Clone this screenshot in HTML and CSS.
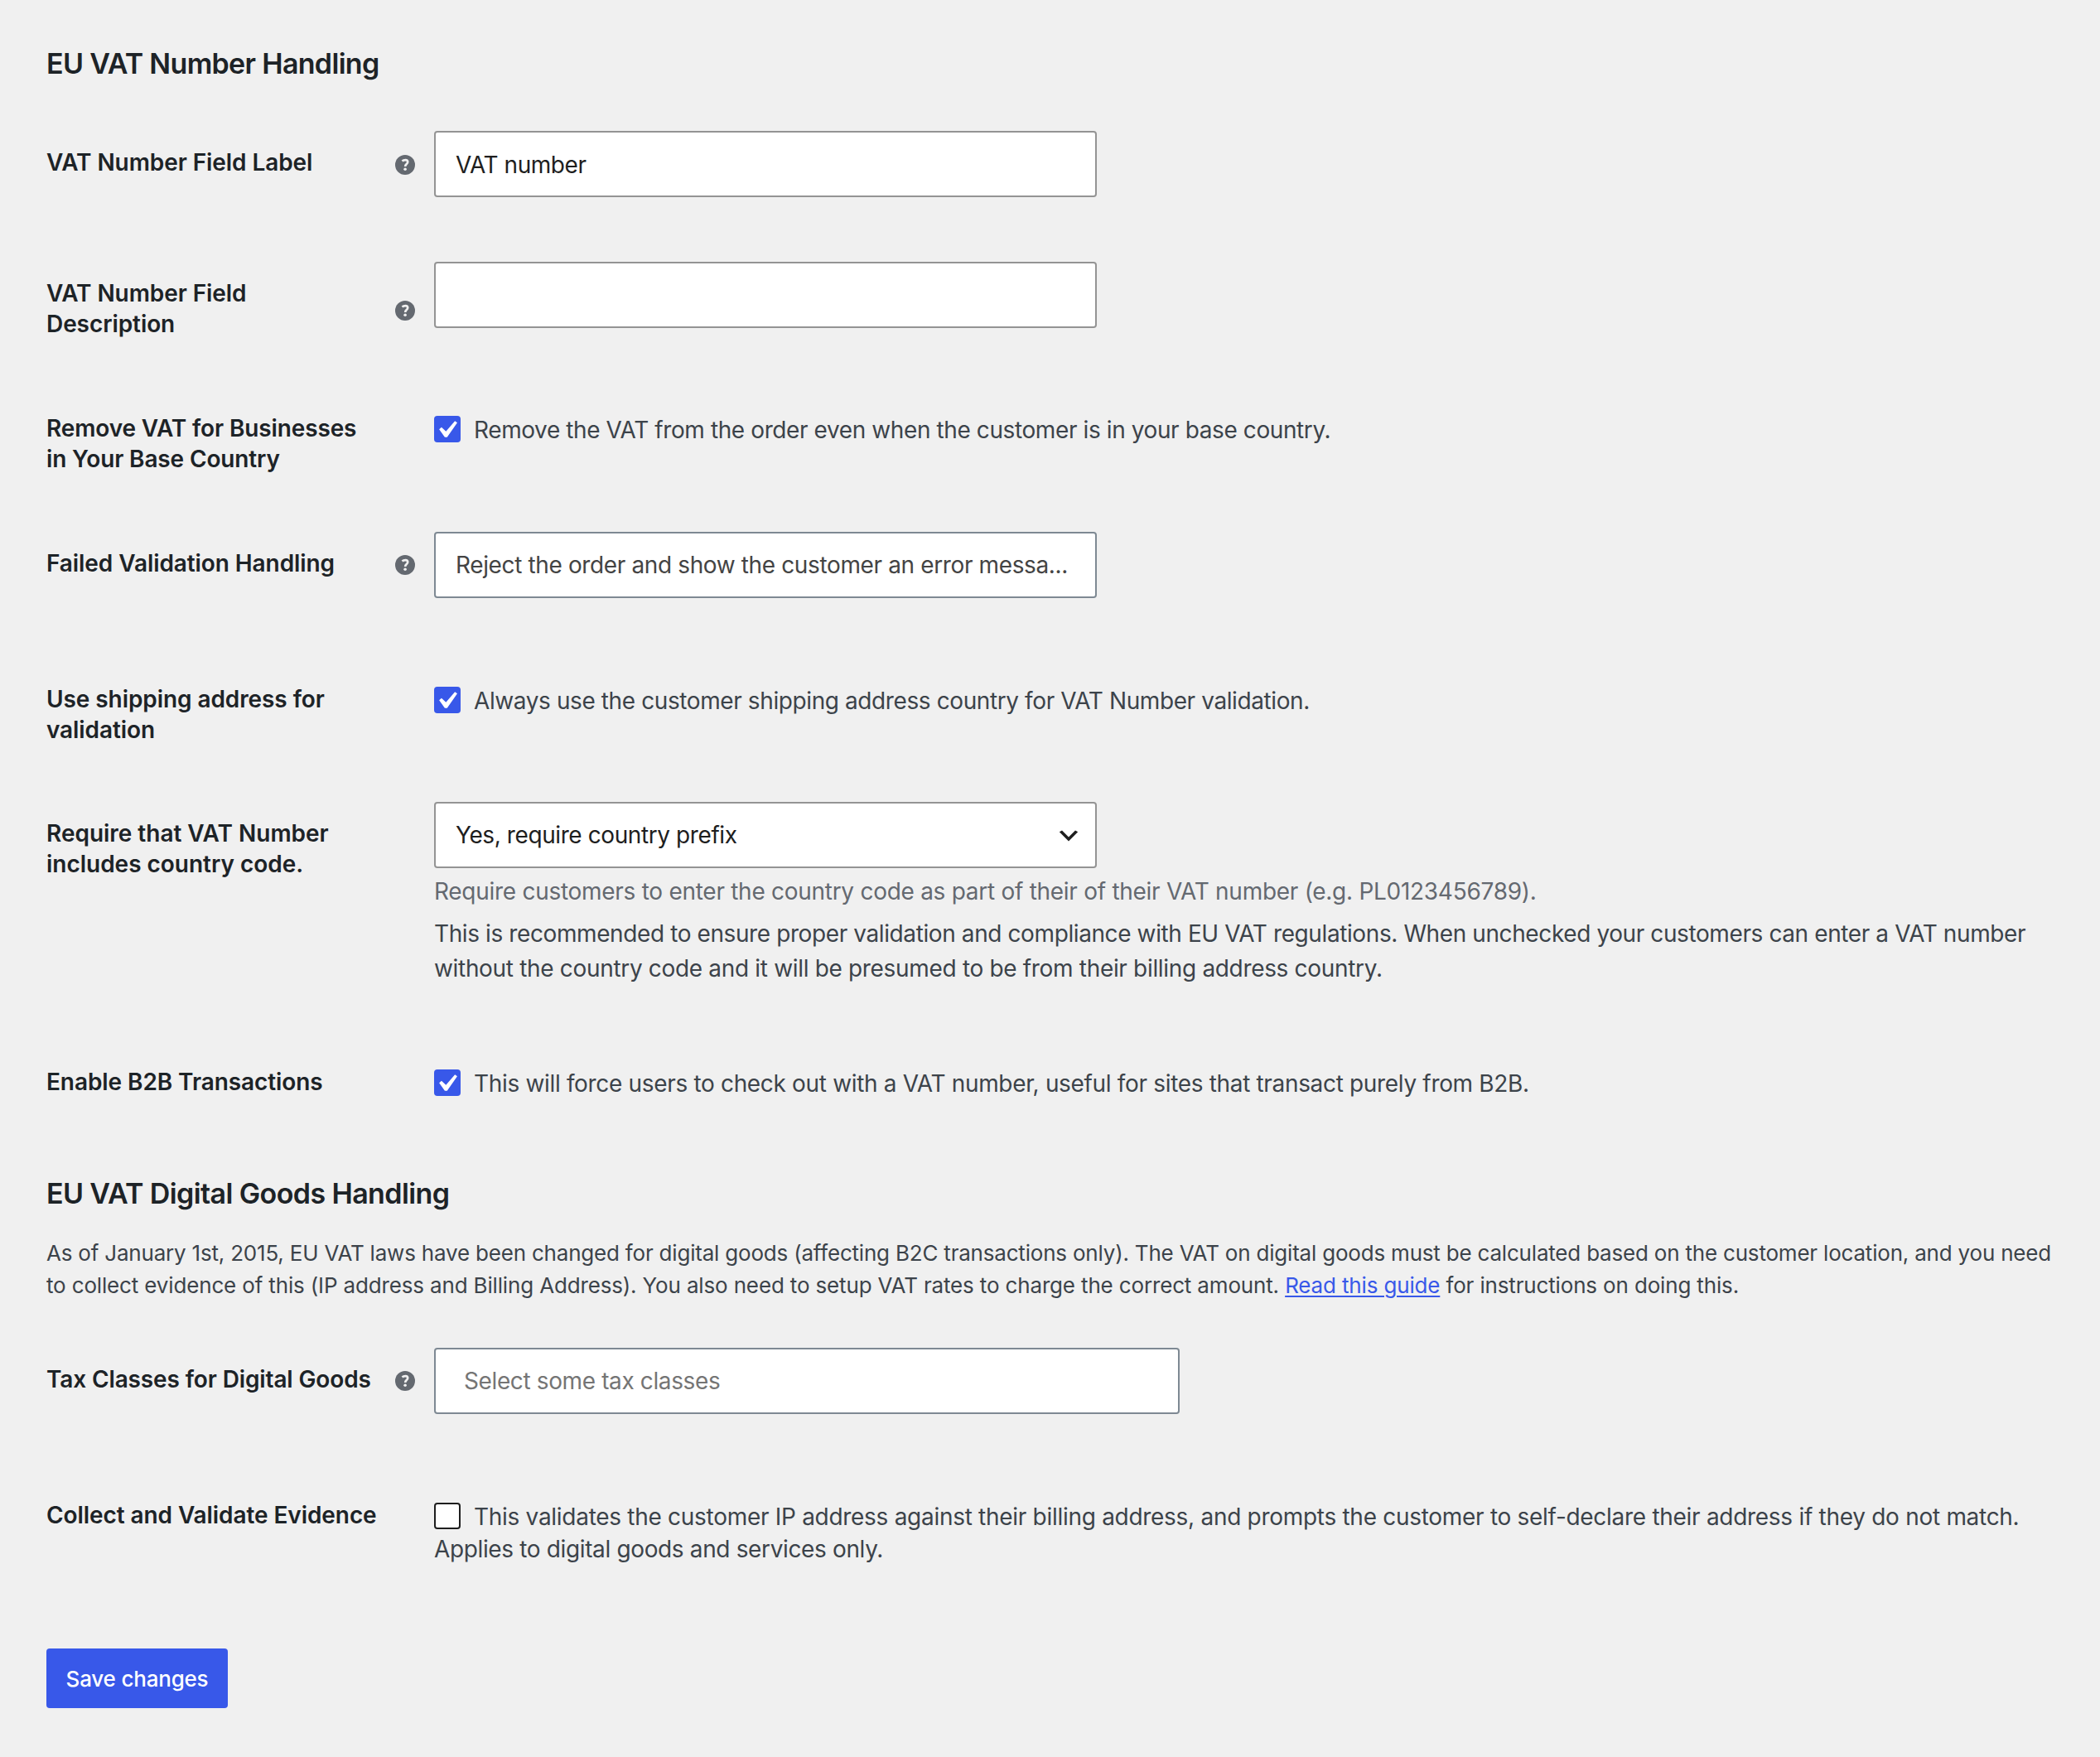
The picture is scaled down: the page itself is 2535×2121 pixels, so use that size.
FILE: index.html
```html
<!DOCTYPE html>
<html lang="en">
<head>
<meta charset="UTF-8">
<title>EU VAT Number Handling</title>

<link rel="stylesheet" href="styles.css">

</head>
<body>

<!-- icons shared by the rows -->
<svg class="sprite" width="0" height="0">
	<symbol id="help" viewBox="0 0 24 24">
		<circle cx="12" cy="12" r="12" fill="#646970" />
		<path d="M8.5 7.5C10.1 6 15.2 5 15.2 8.6c0 2.6-3 2.4-3 5.4" fill="none" stroke="#f0f0f0" stroke-width="2.7" />
		<circle cx="12.1" cy="17.3" r="1.8" fill="#f0f0f0" />
	</symbol>
	<symbol id="check" viewBox="2.857 1.905 15.238 15.238">
		<path d="M14.83 4.89l1.34.94-5.81 8.38H9.02L5.78 9.67l1.34-1.25 2.57 2.4z" fill="#fff" />
	</symbol>
	<symbol id="chevron" viewBox="0 0 20 20">
		<path d="M5 6l5 5 5-5 2 1-7 7-7-7 2-1z" fill="#1e1e1e" />
	</symbol>
</svg>

<form class="wrap">

	<h2>EU VAT Number Handling</h2>

	<div class="form-table">
		<div class="row first">
			<label class="title" for="vat_label">VAT Number Field Label</label>
			<svg class="tip"><use href="#help" /></svg>
			<div class="field">
				<input type="text" class="text" id="vat_label" value="VAT number">
			</div>
		</div>

		<div class="row">
			<label class="title" for="vat_desc">VAT Number Field<br>Description</label>
			<svg class="tip low"><use href="#help" /></svg>
			<div class="field">
				<input type="text" class="text" id="vat_desc">
			</div>
		</div>

		<div class="row">
			<div class="title tight">Remove VAT for Businesses<br>in Your Base Country</div>
			<div class="field checks">
				<label><span class="box on"><svg><use href="#check" /></svg></span>Remove the VAT from the order even when the customer is in your base country.</label>
			</div>
		</div>

		<div class="row failed">
			<div class="title">Failed Validation Handling</div>
			<svg class="tip"><use href="#help" /></svg>
			<div class="field">
				<div class="select2">Reject the order and show the customer an error messa...</div>
			</div>
		</div>

		<div class="row shipping">
			<div class="title">Use shipping address for<br>validation</div>
			<div class="field checks">
				<label><span class="box on"><svg><use href="#check" /></svg></span>Always use the customer shipping address country for VAT Number validation.</label>
			</div>
		</div>

		<div class="row prefix">
			<div class="title loose">Require that VAT Number<br>includes country code.</div>
			<div class="field">
				<div class="select"><span>Yes, require country prefix</span><svg><use href="#chevron" /></svg></div>
				<p class="description">Require customers to enter the country code as part of their of their VAT number (e.g. PL0123456789).</p>
				<p class="note">This is recommended to ensure proper validation and compliance with EU VAT regulations. When unchecked your customers can enter a VAT number<br><span class="last">without the country code and it will be presumed to be from their billing address country.</span></p>
			</div>
		</div>

		<div class="row">
			<div class="title">Enable B2B Transactions</div>
			<div class="field checks b2b">
				<label><span class="box on"><svg><use href="#check" /></svg></span>This will force users to check out with a VAT number, useful for sites that transact purely from B2B.</label>
			</div>
		</div>
	</div>

	<h2 class="digital">EU VAT Digital Goods Handling</h2>

	<p class="intro">As of January 1st, 2015, EU VAT laws have been changed for digital goods (affecting B2C transactions only). The VAT on digital goods must be calculated based on the customer location, and you need<br><span class="last">to collect evidence of this (IP address and Billing Address). You also need to setup VAT rates to charge the correct amount. <a href="#">Read this guide</a> for instructions on doing this.</span></p>

	<div class="form-table">
		<div class="row tax">
			<div class="title tight">Tax Classes for Digital Goods</div>
			<svg class="tip"><use href="#help" /></svg>
			<div class="field">
				<div class="select2 multi">Select some tax classes</div>
			</div>
		</div>

		<div class="row evidence">
			<div class="title">Collect and Validate Evidence</div>
			<div class="field checks">
				<label><span class="box"></span>This validates the customer IP address against their billing address, and prompts the customer to self-declare their address if they do not match.<br><span class="last">Applies to digital goods and services only.</span></label>
			</div>
		</div>
	</div>

	<button type="button" class="save">Save changes</button>

</form>

</body>
</html>
```
FILE: styles.css
```css
html, body {
	margin: 0;
	padding: 0;
}

body {
	background: #f0f0f0;
	color: #3c434a;
	font-family: Inter, "Liberation Sans", sans-serif;
	font-size: 28px;
	line-height: 39.2px;
	letter-spacing: -0.4px;
}

.sprite {
	display: block;
}

.wrap {
	padding: 57px 56px 0;
}

h2 {
	margin: 0 0 31px;
	color: #1d2327;
	font-size: 34px;
	font-weight: 600;
	line-height: 40px;
	letter-spacing: -0.68px;
}

h2.digital {
	margin: 20px 0 32px;
	letter-spacing: -0.61px;
}

/* settings rows */
.row {
	display: flex;
	align-items: flex-start;
	box-sizing: border-box;
	height: 163px;
}

.row.first {
	height: 158px;
}

.row.failed,
.row.tax {
	height: 164px;
}

.row.shipping {
	height: 162px;
}

.row.prefix {
	height: 300px;
}

.row.evidence {
	height: 229px;
}

.title {
	width: 421px;
	padding-top: 50px;
	color: #1d2327;
	font-weight: 600;
	line-height: 36.7px;
	letter-spacing: -0.08px;
	white-space: nowrap;
}

.title.tight {
	letter-spacing: -0.13px;
}

.title.loose {
	letter-spacing: -0.02px;
}

.tip {
	flex: none;
	width: 24px;
	height: 24px;
	margin-top: 59px;
}

.tip.low {
	margin-top: 77px;
}

.failed .tip,
.tax .tip {
	margin-top: 58px;
}

.field {
	margin-left: auto;
	width: 1955px;
	padding-top: 30px;
	white-space: nowrap;
}

/* inputs */
.text,
.select,
.select2 {
	display: flex;
	align-items: center;
	box-sizing: border-box;
	width: 800px;
	height: 80px;
	padding: 2px 24px 0 24px;
	border: 2px solid #949494;
	border-radius: 4px;
	background: #fff;
	color: #1e1e1e;
	font: inherit;
	letter-spacing: -0.44px;
}

.select {
	padding-right: 16px;
	justify-content: space-between;
	letter-spacing: -0.41px;
}

.select svg {
	width: 32px;
	height: 32px;
}

.select2 {
	border-color: #7e8993;
	color: #444;
	letter-spacing: -0.37px;
}

.select2.multi {
	width: 900px;
	padding-left: 34px;
	color: #757575;
	letter-spacing: -0.38px;
}

/* checkboxes */
.field.checks {
	padding-top: 51px;
}

.box {
	display: inline-block;
	box-sizing: border-box;
	width: 32px;
	height: 32px;
	margin-right: 16px;
	border: 2px solid #1e1e1e;
	border-radius: 4px;
	background: #fff;
	vertical-align: -5px;
}

.box.on {
	border: 0;
	background: #3858e9;
}

.box svg {
	display: block;
	width: 32px;
	height: 32px;
}

.b2b {
	letter-spacing: -0.33px;
}

.evidence .checks {
	letter-spacing: -0.29px;
}

.evidence .last {
	letter-spacing: -0.36px;
}

.description {
	margin: 9px 0 0;
	color: #646970;
	letter-spacing: -0.28px;
}

.note {
	margin: 10px 0 0;
	line-height: 42px;
	letter-spacing: -0.398px;
}

.note .last {
	letter-spacing: -0.325px;
}

.intro {
	margin: 0 0 26px;
	font-size: 26px;
	line-height: 39px;
	letter-spacing: -0.2px;
	white-space: nowrap;
}

.intro .last {
	letter-spacing: -0.155px;
}

.intro a {
	color: #3858e9;
	text-decoration-thickness: 2px;
	text-underline-offset: 3px;
}

.save {
	display: block;
	width: 219px;
	height: 72px;
	padding: 1px 0 0;
	border: 0;
	border-radius: 4px;
	background: #3858e9;
	color: #fff;
	font: 500 26px Inter, "Liberation Sans", sans-serif;
	letter-spacing: -0.2px;
}
```
